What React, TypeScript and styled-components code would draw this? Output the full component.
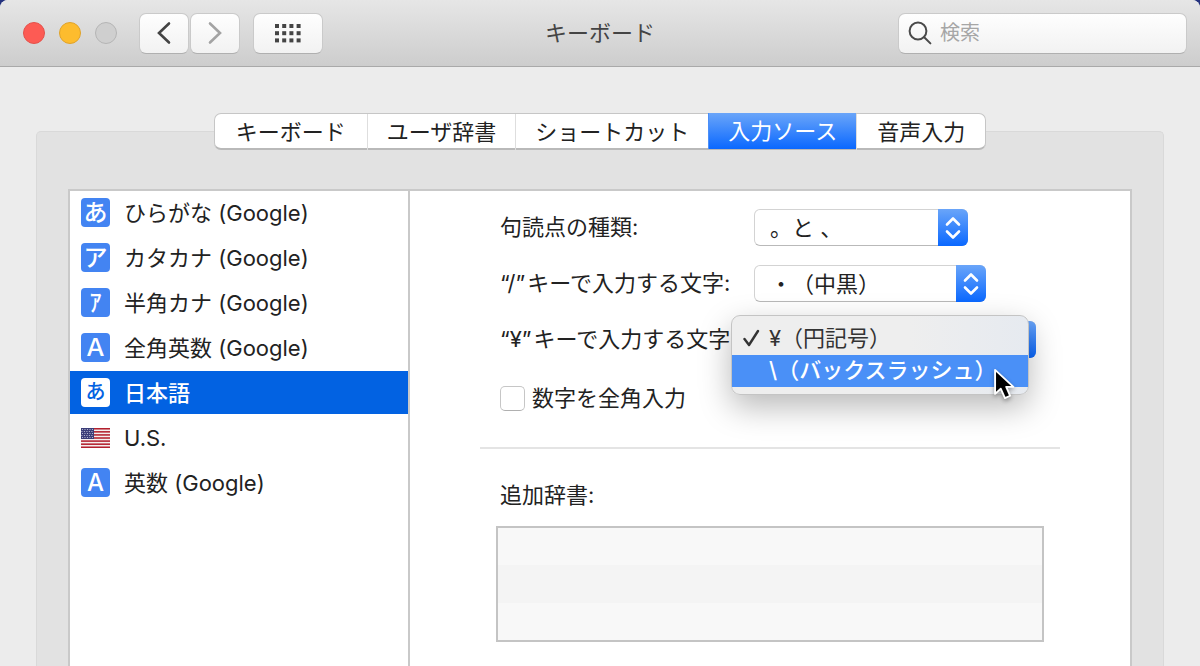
import React from "react";
import styled, { createGlobalStyle } from "styled-components";

const GlobalStyle = createGlobalStyle`
  *, *::before, *::after { box-sizing: border-box; }
  body {
    margin: 0;
    background: #24327e;
    color: #222;
    font-family: Inter, "Noto Sans CJK JP", sans-serif;
    font-size: 22px;
    line-height: 30px;
    text-spacing-trim: space-all;
  }
  button, input, select { font: inherit; color: inherit; }
`;

const Window = styled.div`
  display: flex;
  flex-direction: column;
  min-height: 100vh;
  background: #ececec;
  border-radius: 8px 8px 0 0;
  overflow: hidden;
`;

const TitleBar = styled.header`
  display: grid;
  grid-template-columns: 1fr auto 1fr;
  align-items: center;
  height: 67px;
  padding: 0 13px;
  background: linear-gradient(#e6e6e6, #cdcdcd);
  border-bottom: 1px solid #a9a9a9;
`;

const Title = styled.h1`
  margin: 0;
  font-size: 22px;
  font-weight: 400;
  color: #444;
`;

const Controls = styled.div`
  display: flex;
  align-items: center;
  padding-left: 10px;
`;

const Lights = styled.div`
  display: flex;
  gap: 14px;
  margin-right: 21px;
`;

const Light = styled.button<{ $fill: string; $edge: string }>`
  width: 22px;
  height: 22px;
  padding: 0;
  border: 1px solid ${(p) => p.$edge};
  border-radius: 50%;
  background: ${(p) => p.$fill};
`;

const ToolButton = styled.button<{ $wide?: boolean }>`
  display: flex;
  align-items: center;
  justify-content: center;
  width: ${(p) => (p.$wide ? 70 : 50)}px;
  height: 41px;
  margin-left: ${(p) => (p.$wide ? 13 : 1)}px;
  padding: 0;
  border: 1px solid #cacaca;
  border-bottom-color: #b0b0b0;
  border-radius: 7px;
  background: linear-gradient(#fefefe, #f2f2f2);
`;

const Search = styled.label`
  display: flex;
  align-items: center;
  gap: 8px;
  justify-self: end;
  width: 289px;
  height: 41px;
  padding: 0 9px;
  border: 1px solid #cacaca;
  border-bottom-color: #b0b0b0;
  border-radius: 7px;
  background: linear-gradient(#fefefe, #f2f2f2);
`;

const SearchInput = styled.input`
  flex: 1;
  min-width: 0;
  padding: 0;
  border: 0;
  outline: 0;
  background: none;
  font-size: 20px;
  &::placeholder { color: #a6a6a6; opacity: 1; }
`;

const Content = styled.main`
  flex: 1;
  display: flex;
  flex-direction: column;
  padding: 46px 36px 0;
`;

const Tabs = styled.div`
  position: relative;
  z-index: 1;
  display: flex;
  align-self: center;
  height: 37px;
  margin-bottom: -19px;
  border: 1px solid #c6c6c6;
  border-bottom: 2px solid #b9b9b9;
  border-radius: 7px;
  background: #fff;
`;

const Tab = styled.button<{ $active: boolean }>`
  height: 36px;
  margin: ${(p) => (p.$active ? "-1px 0" : "0")};
  padding: 0 19px;
  border: 0;
  border-left: 1px solid ${(p) => (p.$active ? "#4c8ff8" : "#dedede")};
  background: ${(p) => (p.$active ? "linear-gradient(#6aa5f9, #0a68ff)" : "transparent")};
  color: ${(p) => (p.$active ? "#fff" : "#222")};
  line-height: 34px;
  &:first-child { border-left: 0; padding: 0 21px; }
  &:last-child { padding: 0 20px; }
`;

const Panel = styled.section`
  flex: 1;
  display: flex;
  padding: 57px 31px 0;
  border: 1px solid #d9d9d9;
  border-bottom: 0;
  border-radius: 5px 5px 0 0;
  background: #e2e2e2;
`;

const Split = styled.div`
  flex: 1;
  display: flex;
  min-width: 0;
  border: 2px solid #c9c9c9;
  border-bottom: 0;
  background: #fff;
`;

const Sources = styled.ul`
  display: flex;
  flex-direction: column;
  gap: 2px;
  flex: none;
  width: 340px;
  margin: 0;
  padding: 0;
  border-right: 2px solid #c9c9c9;
  list-style: none;
`;

const Source = styled.li<{ $selected: boolean }>`
  display: flex;
  align-items: center;
  gap: 14px;
  height: 43px;
  padding-left: 11px;
  background: ${(p) => (p.$selected ? "#0262e2" : "#fff")};
  color: ${(p) => (p.$selected ? "#fff" : "#222")};
  font-weight: ${(p) => (p.$selected ? 500 : 400)};
`;

const Badge = styled.span<{ $selected: boolean; $small: boolean }>`
  display: flex;
  align-items: center;
  justify-content: center;
  width: 29px;
  height: 29px;
  border-radius: 4px;
  background: ${(p) => (p.$selected ? "#fff" : "#4384f2")};
  color: ${(p) => (p.$selected ? "#0262e2" : "#fff")};
  font-size: ${(p) => (p.$small ? 20 : 24)}px;
  font-weight: 500;
  line-height: 29px;
`;

const Detail = styled.div`
  flex: 1;
  min-width: 0;
  padding: 18px 70px 24px;
`;

const Fields = styled.div`
  display: flex;
  flex-direction: column;
  gap: 20px;
  padding: 0 20px 34px;
  border-bottom: 2px solid #e4e4e4;
`;

const Field = styled.div`
  display: grid;
  grid-template-columns: 254px auto;
  justify-content: start;
  align-items: center;
  height: 36px;
  white-space: nowrap;
`;

const KeyName = styled.span`
  margin-right: 2px;
`;

const SelectBox = styled.div<{ $width: number }>`
  position: relative;
  width: ${(p) => p.$width}px;
  height: 36px;
`;

const Select = styled.select`
  appearance: none;
  display: block;
  width: 100%;
  height: 37px;
  padding: 0 40px 0 15px;
  border: 1px solid #d3d3d3;
  border-bottom-color: #b9b9b9;
  border-radius: 6px;
  outline: 0;
  background: #fff;
  text-spacing-trim: space-all;
`;

const Stepper = styled.span`
  position: absolute;
  top: 0;
  right: 0;
  display: flex;
  align-items: center;
  justify-content: center;
  width: 30px;
  height: 37px;
  border-radius: 0 6px 6px 0;
  background: linear-gradient(#6aa5f9, #0a68ff);
  pointer-events: none;
`;

const Menu = styled.ul`
  position: absolute;
  top: -6px;
  left: -23px;
  z-index: 2;
  width: 298px;
  margin: 0;
  padding: 7px 0;
  border: 1px solid #c4c4c4;
  border-radius: 9px;
  background: linear-gradient(90deg, #eeeeee 60%, #e6eaf0);
  box-shadow: 0 12px 32px rgba(0, 0, 0, 0.28);
  list-style: none;
`;

const MenuItem = styled.li<{ $active: boolean }>`
  display: grid;
  grid-template-columns: 26px auto;
  align-items: center;
  height: 32px;
  padding: 0 0 2px 11px;
  background: ${(p) => (p.$active ? "#4a90f7" : "transparent")};
  color: ${(p) => (p.$active ? "#fff" : "#333")};
  font-weight: ${(p) => (p.$active ? 500 : 400)};
`;

const Pointer = styled.svg`
  position: absolute;
  top: 52px;
  left: 261px;
  filter: drop-shadow(0 2px 2px rgba(0, 0, 0, 0.35));
`;

const CheckRow = styled.label`
  display: flex;
  align-items: center;
  gap: 7px;
  margin-top: 6px;
`;

const Checkbox = styled.input`
  appearance: none;
  width: 25px;
  height: 25px;
  margin: 0;
  border: 1px solid #c6c6c6;
  border-bottom-color: #b0b0b0;
  border-radius: 5px;
  background: #fff;
`;

const Caption = styled.h2`
  margin: 0;
  padding: 31px 20px 16px;
  font-size: 22px;
  font-weight: 400;
`;

const Dictionaries = styled.div`
  height: 116px;
  margin: 0 16px;
  border: 2px solid #c4c4c4;
  background: linear-gradient(#f8f8f8 37px, #f4f4f4 37px, #f4f4f4 75px, #f8f8f8 75px);
`;

const tabs = ["キーボード", "ユーザ辞書", "ショートカット", "入力ソース", "音声入力"];

const sources = [
  { glyph: "あ", name: "ひらがな (Google)" },
  { glyph: "ア", name: "カタカナ (Google)" },
  { glyph: "ｱ", name: "半角カナ (Google)" },
  { glyph: "Ａ", name: "全角英数 (Google)" },
  { glyph: "あ", name: "日本語", selected: true, small: true },
  { glyph: "flag", name: "U.S." },
  { glyph: "A", name: "英数 (Google)" },
];

const Flag = () => (
  <svg width="29" height="20" viewBox="0 0 29 20" aria-hidden="true">
    <rect width="29" height="20" fill="#f4eeee" />
    {[0, 1, 2, 3, 4, 5, 6].map((i) => (
      <rect key={i} y={i * 3.08} width="29" height="1.54" fill="#b3202e" />
    ))}
    <rect width="13" height="11" fill="#3b3d78" />
    {[1, 3, 5, 7, 9].map((y, r) =>
      [1.5, 4, 6.5, 9, 11.5].map((x) => (
        <circle key={`${x}-${y}`} cx={r % 2 ? x - 0.6 : x} cy={y + 0.5} r="0.6" fill="#c9c9dd" />
      ))
    )}
  </svg>
);

const Arrows = () => (
  <Stepper>
    <svg width="16" height="24" viewBox="0 0 16 24" fill="none" stroke="#fff" strokeWidth="2.6" strokeLinecap="round" strokeLinejoin="round" aria-hidden="true">
      <path d="M2 8.5 8 2.5 14 8.5M2 15.5 8 21.5 14 15.5" />
    </svg>
  </Stepper>
);

export default function App() {
  return (
    <>
      <GlobalStyle />
      <Window>
        <TitleBar>
          <Controls>
            <Lights>
              <Light aria-label="閉じる" $fill="#fd5b54" $edge="#e4514b" />
              <Light aria-label="しまう" $fill="#fdbc2e" $edge="#e0a32a" />
              <Light aria-label="拡大" $fill="#cfcfcf" $edge="#b5b5b5" disabled />
            </Lights>
            <ToolButton aria-label="戻る">
              <svg width="14" height="24" viewBox="0 0 14 24" fill="none" stroke="#444" strokeWidth="2.6" strokeLinecap="round">
                <path d="M12 2.5 2 12 12 21.5" />
              </svg>
            </ToolButton>
            <ToolButton aria-label="進む">
              <svg width="14" height="24" viewBox="0 0 14 24" fill="none" stroke="#a3a3a3" strokeWidth="2.6" strokeLinecap="round">
                <path d="M2 2.5 12 12 2 21.5" />
              </svg>
            </ToolButton>
            <ToolButton aria-label="すべてを表示" $wide>
              <svg width="26" height="19" viewBox="0 0 26 19" fill="#444">
                {[0, 7.2, 14.4].map((y) =>
                  [0, 7.2, 14.4, 21.6].map((x) => (
                    <rect key={`${x}-${y}`} x={x} y={y} width="4" height="4" />
                  ))
                )}
              </svg>
            </ToolButton>
          </Controls>
          <Title>キーボード</Title>
          <Search>
            <svg width="24" height="24" viewBox="0 0 24 24" fill="none" stroke="#4a4a4a" strokeWidth="2" strokeLinecap="round" aria-hidden="true">
              <circle cx="10" cy="10" r="8.4" />
              <path d="M16.2 16.2 22.4 22.4" />
            </svg>
            <SearchInput type="text" placeholder="検索" aria-label="検索" />
          </Search>
        </TitleBar>
        <Content>
          <Tabs role="tablist">
            {tabs.map((name) => (
              <Tab key={name} role="tab" aria-selected={name === "入力ソース"} $active={name === "入力ソース"}>
                {name}
              </Tab>
            ))}
          </Tabs>
          <Panel>
            <Split>
              <Sources>
                {sources.map((s) => (
                  <Source key={s.name} $selected={!!s.selected}>
                    {s.glyph === "flag" ? (
                      <Flag />
                    ) : (
                      <Badge $selected={!!s.selected} $small={!!s.small}>
                        {s.glyph}
                      </Badge>
                    )}
                    {s.name}
                  </Source>
                ))}
              </Sources>
              <Detail>
                <Fields>
                  <Field>
                    <label htmlFor="punctuation">句読点の種類:</label>
                    <SelectBox $width={214}>
                      <Select id="punctuation">
                        <option>。と 、</option>
                      </Select>
                      <Arrows />
                    </SelectBox>
                  </Field>
                  <Field>
                    <label htmlFor="slash">
                      <KeyName>“/”</KeyName>キーで入力する文字:
                    </label>
                    <SelectBox $width={232}>
                      <Select id="slash">
                        <option>・（中黒）</option>
                      </Select>
                      <Arrows />
                    </SelectBox>
                  </Field>
                  <Field>
                    <label htmlFor="yen">
                      <KeyName>“¥”</KeyName>キーで入力する文字:
                    </label>
                    <SelectBox $width={282}>
                      <Select id="yen" />
                      <Arrows />
                      <Menu role="listbox">
                        <MenuItem role="option" aria-selected $active={false}>
                          <svg width="17" height="18" viewBox="0 0 17 18" fill="none" stroke="#333" strokeWidth="2.4" strokeLinecap="round" strokeLinejoin="round" aria-hidden="true">
                            <path d="M1.5 10 6 16 15 2" />
                          </svg>
                          <span>¥（円記号）</span>
                        </MenuItem>
                        <MenuItem role="option" aria-selected={false} $active>
                          <span />
                          <span>\（バックスラッシュ）</span>
                        </MenuItem>
                        <Pointer width="23" height="32" viewBox="0 0 24 34" aria-hidden="true">
                          <path d="M2 2V27.5L8 22L12.5 32L18 29.5L13.8 20H21.5Z" fill="#000" stroke="#fff" strokeWidth="2" strokeLinejoin="round" />
                        </Pointer>
                      </Menu>
                    </SelectBox>
                  </Field>
                  <CheckRow>
                    <Checkbox type="checkbox" />
                    数字を全角入力
                  </CheckRow>
                </Fields>
                <Caption>追加辞書:</Caption>
                <Dictionaries />
              </Detail>
            </Split>
          </Panel>
        </Content>
      </Window>
    </>
  );
}
